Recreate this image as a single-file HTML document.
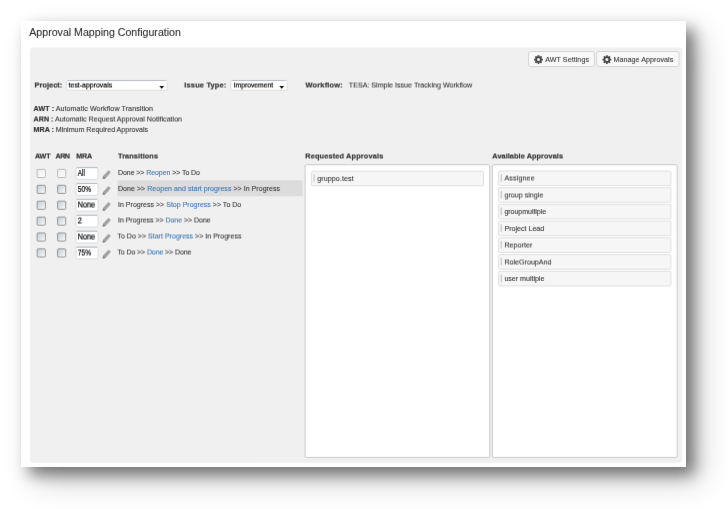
<!DOCTYPE html>
<html><head><meta charset="utf-8"><title>Approval Mapping Configuration</title>
<style>
html,body{margin:0;padding:0;}
body{width:728px;height:509px;overflow:hidden;background:#fff;position:relative;font-family:"Liberation Sans",sans-serif;color:#333;}
.page{position:absolute;left:21px;top:21px;width:665px;height:446px;background:#fff;box-shadow:8px 8px 14px rgba(0,0,0,.46),14px 14px 30px rgba(0,0,0,.2);}
svg{position:absolute;left:0;top:0;overflow:visible;}
svg.txt{font-family:"Liberation Sans",sans-serif;fill:#333;stroke:#333;stroke-width:.09px;white-space:pre;}
svg.txt [font-weight=bold]{stroke-width:.2px;}
</style></head>
<body>
<div class="page"></div>
<svg class="shp" width="728" height="509" viewBox="0 0 728 509">
<defs>
<filter id="fa" filterUnits="userSpaceOnUse" x="0" y="0" width="728" height="509" color-interpolation-filters="sRGB"><feConvolveMatrix order="3 3" kernelMatrix="0.0025 0.0450 0.0025 0.0450 0.8100 0.0450 0.0025 0.0450 0.0025" edgeMode="none" preserveAlpha="false"/></filter>
<filter id="fb" filterUnits="userSpaceOnUse" x="0" y="0" width="728" height="509" color-interpolation-filters="sRGB"><feConvolveMatrix order="3 2" kernelMatrix="0.0250 0.4500 0.0250 0.0250 0.4500 0.0250" targetX="1" targetY="1" edgeMode="none" preserveAlpha="false"/></filter>
<linearGradient id="cbd" x1="0" y1="0" x2="1" y2="1"><stop offset="0" stop-color="#c3cad1"/><stop offset=".55" stop-color="#e2e6e9"/><stop offset="1" stop-color="#fdfdfd"/></linearGradient>
<linearGradient id="cbe" x1="0" y1="0" x2="1" y2="1"><stop offset="0" stop-color="#ececec"/><stop offset="1" stop-color="#ffffff"/></linearGradient>
<g id="gear" fill="#454545"><rect x="-.85" y="-4.4" width="1.7" height="8.8" rx=".25" transform="rotate(0)"/><rect x="-.85" y="-4.4" width="1.7" height="8.8" rx=".25" transform="rotate(45)"/><rect x="-.85" y="-4.4" width="1.7" height="8.8" rx=".25" transform="rotate(90)"/><rect x="-.85" y="-4.4" width="1.7" height="8.8" rx=".25" transform="rotate(135)"/><circle r="3.25"/><circle r="1.5" fill="#fafafa"/></g>
<g id="pencil"><path d="M0 8.3 L0.5 5.3 L5.2 0.1 Q6.2 -0.7 7.3 0.3 Q8.4 1.5 7.5 2.4 L2.9 7.6 Z" fill="#a2a2a2"/><path d="M0 8.3 L0.5 5.3 L2.9 7.6 Z" fill="#858585"/></g>
<path id="arr" d="M0 0 H4.9 L2.45 2.8 Z" fill="#0a0a0a"/>
</defs>
<g filter="url(#fa)">
<rect x="30.10" y="47.50" width="652.20" height="415.20" fill="#f0f0f0" rx="3"/>
<rect x="528.50" y="51.50" width="65.90" height="15.10" fill="#f9f9f9" stroke="#cfcfcf" stroke-width="0.9" rx="2.2"/>
<use href="#gear" x="538.5" y="59.6"/>
<rect x="596.70" y="51.50" width="82.30" height="15.10" fill="#f9f9f9" stroke="#cfcfcf" stroke-width="0.9" rx="2.2"/>
<use href="#gear" x="606.9" y="59.6"/>
<rect x="66.40" y="80.50" width="100.90" height="9.80" fill="#fff" stroke="#d8dbe0" stroke-width="0.9" rx="1.6"/>
<path d="M68.00 80.5 H165.70" stroke="#b9bdc3" stroke-width="1"/>
<use href="#arr" x="159.30" y="85.9"/>
<rect x="230.70" y="80.50" width="56.60" height="9.80" fill="#fff" stroke="#d8dbe0" stroke-width="0.9" rx="1.6"/>
<path d="M232.30 80.5 H285.70" stroke="#b9bdc3" stroke-width="1"/>
<use href="#arr" x="279.30" y="85.9"/>
<rect x="117.50" y="180.30" width="185.10" height="15.90" fill="#dcdcdc"/>
<rect x="37.15" y="169.35" width="8.20" height="8.15" fill="url(#cbe)" stroke="#b6b6b6" stroke-width="0.9" rx="0.8"/>
<rect x="57.55" y="169.35" width="8.15" height="8.15" fill="url(#cbe)" stroke="#b6b6b6" stroke-width="0.9" rx="0.8"/>
<rect x="75.95" y="167.60" width="22.20" height="11.80" fill="#fff" stroke="#d3d7dd" stroke-width="0.9" rx="1.6"/>
<path d="M76.8 167.6 H97.3" stroke="#b9bdc3" stroke-width="1"/>
<use href="#pencil" x="102.6" y="170.8"/>
<rect x="37.15" y="185.25" width="8.20" height="8.15" fill="url(#cbd)" stroke="#8c8c8c" stroke-width="0.9" rx="0.8"/>
<rect x="57.55" y="185.25" width="8.15" height="8.15" fill="url(#cbd)" stroke="#8c8c8c" stroke-width="0.9" rx="0.8"/>
<rect x="75.95" y="183.50" width="22.20" height="11.80" fill="#fff" stroke="#d3d7dd" stroke-width="0.9" rx="1.6"/>
<path d="M76.8 183.5 H97.3" stroke="#b9bdc3" stroke-width="1"/>
<use href="#pencil" x="102.6" y="186.7"/>
<rect x="37.15" y="201.15" width="8.20" height="8.15" fill="url(#cbd)" stroke="#8c8c8c" stroke-width="0.9" rx="0.8"/>
<rect x="57.55" y="201.15" width="8.15" height="8.15" fill="url(#cbd)" stroke="#8c8c8c" stroke-width="0.9" rx="0.8"/>
<rect x="75.95" y="199.40" width="22.20" height="11.80" fill="#fff" stroke="#d3d7dd" stroke-width="0.9" rx="1.6"/>
<path d="M76.8 199.4 H97.3" stroke="#b9bdc3" stroke-width="1"/>
<use href="#pencil" x="102.6" y="202.6"/>
<rect x="37.15" y="217.05" width="8.20" height="8.15" fill="url(#cbd)" stroke="#8c8c8c" stroke-width="0.9" rx="0.8"/>
<rect x="57.55" y="217.05" width="8.15" height="8.15" fill="url(#cbd)" stroke="#8c8c8c" stroke-width="0.9" rx="0.8"/>
<rect x="75.95" y="215.30" width="22.20" height="11.80" fill="#fff" stroke="#d3d7dd" stroke-width="0.9" rx="1.6"/>
<path d="M76.8 215.3 H97.3" stroke="#b9bdc3" stroke-width="1"/>
<use href="#pencil" x="102.6" y="218.5"/>
<rect x="37.15" y="232.95" width="8.20" height="8.15" fill="url(#cbd)" stroke="#8c8c8c" stroke-width="0.9" rx="0.8"/>
<rect x="57.55" y="232.95" width="8.15" height="8.15" fill="url(#cbd)" stroke="#8c8c8c" stroke-width="0.9" rx="0.8"/>
<rect x="75.95" y="231.20" width="22.20" height="11.80" fill="#fff" stroke="#d3d7dd" stroke-width="0.9" rx="1.6"/>
<path d="M76.8 231.2 H97.3" stroke="#b9bdc3" stroke-width="1"/>
<use href="#pencil" x="102.6" y="234.4"/>
<rect x="37.15" y="248.85" width="8.20" height="8.15" fill="url(#cbd)" stroke="#8c8c8c" stroke-width="0.9" rx="0.8"/>
<rect x="57.55" y="248.85" width="8.15" height="8.15" fill="url(#cbd)" stroke="#8c8c8c" stroke-width="0.9" rx="0.8"/>
<rect x="75.95" y="247.10" width="22.20" height="11.80" fill="#fff" stroke="#d3d7dd" stroke-width="0.9" rx="1.6"/>
<path d="M76.8 247.1 H97.3" stroke="#b9bdc3" stroke-width="1"/>
<use href="#pencil" x="102.6" y="250.3"/>
<rect x="305.10" y="164.70" width="184.60" height="292.70" fill="#fff" stroke="#c9c9c9" stroke-width="1" rx="1.2"/>
<rect x="492.40" y="164.70" width="184.80" height="292.70" fill="#fff" stroke="#c9c9c9" stroke-width="1" rx="1.2"/>
<rect x="311.30" y="171.20" width="172.20" height="14.60" fill="#f6f6f6" stroke="#dcdcdc" stroke-width="0.9" rx="1.8"/>
<path d="M314.05 174.40 v7.6" stroke="#9a9a9a" stroke-width=".65"/>
<rect x="498.50" y="170.95" width="172.50" height="14.60" fill="#f6f6f6" stroke="#dcdcdc" stroke-width="0.9" rx="1.8"/>
<path d="M501.25 174.15 v7.6" stroke="#9a9a9a" stroke-width=".65"/>
<rect x="498.50" y="187.68" width="172.50" height="14.60" fill="#f6f6f6" stroke="#dcdcdc" stroke-width="0.9" rx="1.8"/>
<path d="M501.25 190.88 v7.6" stroke="#9a9a9a" stroke-width=".65"/>
<rect x="498.50" y="204.41" width="172.50" height="14.60" fill="#f6f6f6" stroke="#dcdcdc" stroke-width="0.9" rx="1.8"/>
<path d="M501.25 207.61 v7.6" stroke="#9a9a9a" stroke-width=".65"/>
<rect x="498.50" y="221.14" width="172.50" height="14.60" fill="#f6f6f6" stroke="#dcdcdc" stroke-width="0.9" rx="1.8"/>
<path d="M501.25 224.34 v7.6" stroke="#9a9a9a" stroke-width=".65"/>
<rect x="498.50" y="237.87" width="172.50" height="14.60" fill="#f6f6f6" stroke="#dcdcdc" stroke-width="0.9" rx="1.8"/>
<path d="M501.25 241.07 v7.6" stroke="#9a9a9a" stroke-width=".65"/>
<rect x="498.50" y="254.60" width="172.50" height="14.60" fill="#f6f6f6" stroke="#dcdcdc" stroke-width="0.9" rx="1.8"/>
<path d="M501.25 257.80 v7.6" stroke="#9a9a9a" stroke-width=".65"/>
<rect x="498.50" y="271.33" width="172.50" height="14.60" fill="#f6f6f6" stroke="#dcdcdc" stroke-width="0.9" rx="1.8"/>
<path d="M501.25 274.53 v7.6" stroke="#9a9a9a" stroke-width=".65"/>
</g>
</svg>
<svg class="txt" width="728" height="509" viewBox="0 0 728 509">
<g filter="url(#fa)">
<text x="29.3" y="36" font-size="11" textLength="151.6" lengthAdjust="spacingAndGlyphs" fill="#2a2a2a" stroke="#2a2a2a">Approval Mapping Configuration</text>
<text x="545.2" y="62" font-size="7.15" textLength="43.8" lengthAdjust="spacing">AWT Settings</text>
<text x="613.4" y="62" font-size="7.15" textLength="59.9" lengthAdjust="spacing">Manage Approvals</text>
<text x="33.6" y="111" font-size="7.15" textLength="119.5" lengthAdjust="spacing"><tspan font-weight="bold">AWT :</tspan> Automatic Workflow Transition</text>
<text x="33.6" y="132" font-size="7.15" textLength="114.5" lengthAdjust="spacing"><tspan font-weight="bold">MRA :</tspan> Minimum Required Approvals</text>
<text x="77.8" y="176" font-size="8.3" textLength="7.1" lengthAdjust="spacingAndGlyphs" fill="#000" stroke="#000" stroke-width=".2">All</text>
<text x="118" y="175" font-size="7.0" textLength="82" lengthAdjust="spacing">Done &gt;&gt; <tspan fill="#3b73af" stroke="#3b73af">Reopen</tspan> &gt;&gt; To Do</text>
<text x="77.8" y="192" font-size="8.3" textLength="13.3" lengthAdjust="spacingAndGlyphs" fill="#000" stroke="#000" stroke-width=".2">50%</text>
<text x="118" y="191" font-size="7.0" textLength="162" lengthAdjust="spacing">Done &gt;&gt; <tspan fill="#3b73af" stroke="#3b73af">Reopen and start progress</tspan> &gt;&gt; In Progress</text>
<text x="118" y="207" font-size="7.0" textLength="123.25" lengthAdjust="spacing">In Progress &gt;&gt; <tspan fill="#3b73af" stroke="#3b73af">Stop Progress</tspan> &gt;&gt; To Do</text>
<text x="317.2" y="181" font-size="7.15" textLength="36.5" lengthAdjust="spacing">gruppo.test</text>
<text x="504.4" y="214" font-size="7.15" textLength="41.8" lengthAdjust="spacing">groupmultiple</text>
<text x="504.4" y="231" font-size="7.15" textLength="39.9" lengthAdjust="spacing">Project Lead</text>
<text x="504.4" y="281" font-size="7.15" textLength="40" lengthAdjust="spacing">user multiple</text>
</g>
<g filter="url(#fb)">
<text x="34.6" y="87" font-size="7.4" textLength="27.6" lengthAdjust="spacing" font-weight="bold">Project:</text>
<text x="68.6" y="87" font-size="8" textLength="43.6" lengthAdjust="spacingAndGlyphs" fill="#000" stroke="#000" stroke-width=".2">test-approvals</text>
<text x="184.3" y="87" font-size="7.4" textLength="42" lengthAdjust="spacing" font-weight="bold">Issue Type:</text>
<text x="233.7" y="87" font-size="8" textLength="39.4" lengthAdjust="spacingAndGlyphs" fill="#000" stroke="#000" stroke-width=".2">Improvement</text>
<text x="305.6" y="87" font-size="7.4" textLength="37" lengthAdjust="spacing" font-weight="bold">Workflow:</text>
<text x="348.8" y="87" font-size="7.15" textLength="123.25" lengthAdjust="spacing">TESA: Simple Issue Tracking Workflow</text>
<text x="33.6" y="121" font-size="7.15" textLength="148.5" lengthAdjust="spacing"><tspan font-weight="bold">ARN :</tspan> Automatic Request Approval Notification</text>
<text x="35" y="158" font-size="7.15" textLength="15.5" lengthAdjust="spacing" font-weight="bold">AWT</text>
<text x="55.5" y="158" font-size="7.15" textLength="14.5" lengthAdjust="spacing" font-weight="bold">ARN</text>
<text x="76.3" y="158" font-size="7.15" textLength="15.75" lengthAdjust="spacing" font-weight="bold">MRA</text>
<text x="118" y="158" font-size="7.3" textLength="40" lengthAdjust="spacing" font-weight="bold">Transitions</text>
<text x="305.2" y="158" font-size="7.3" textLength="78" lengthAdjust="spacing" font-weight="bold">Requested Approvals</text>
<text x="492.3" y="158" font-size="7.3" textLength="70.7" lengthAdjust="spacing" font-weight="bold">Available Approvals</text>
<text x="77.8" y="207" font-size="8.3" textLength="17.2" lengthAdjust="spacingAndGlyphs" fill="#000" stroke="#000" stroke-width=".2">None</text>
<text x="77.8" y="223" font-size="8.3" textLength="4.1" lengthAdjust="spacingAndGlyphs" fill="#000" stroke="#000" stroke-width=".2">2</text>
<text x="118" y="222" font-size="7.0" textLength="92.75" lengthAdjust="spacing">In Progress &gt;&gt; <tspan fill="#3b73af" stroke="#3b73af">Done</tspan> &gt;&gt; Done</text>
<text x="77.8" y="239" font-size="8.3" textLength="17.2" lengthAdjust="spacingAndGlyphs" fill="#000" stroke="#000" stroke-width=".2">None</text>
<text x="117.4" y="238" font-size="7.0" textLength="124" lengthAdjust="spacing">To Do &gt;&gt; <tspan fill="#3b73af" stroke="#3b73af">Start Progress</tspan> &gt;&gt; In Progress</text>
<text x="77.8" y="255" font-size="8.3" textLength="13.3" lengthAdjust="spacingAndGlyphs" fill="#000" stroke="#000" stroke-width=".2">75%</text>
<text x="117.4" y="254" font-size="7.0" textLength="74" lengthAdjust="spacing">To Do &gt;&gt; <tspan fill="#3b73af" stroke="#3b73af">Done</tspan> &gt;&gt; Done</text>
<text x="504.4" y="180" font-size="7.15" textLength="30.3" lengthAdjust="spacing">Assignee</text>
<text x="504.4" y="197" font-size="7.15" textLength="39" lengthAdjust="spacing">group single</text>
<text x="504.4" y="247" font-size="7.15" textLength="28" lengthAdjust="spacing">Reporter</text>
<text x="504.4" y="264" font-size="7.15" textLength="47.1" lengthAdjust="spacing">RoleGroupAnd</text>
</g>
</svg>
</body></html>
